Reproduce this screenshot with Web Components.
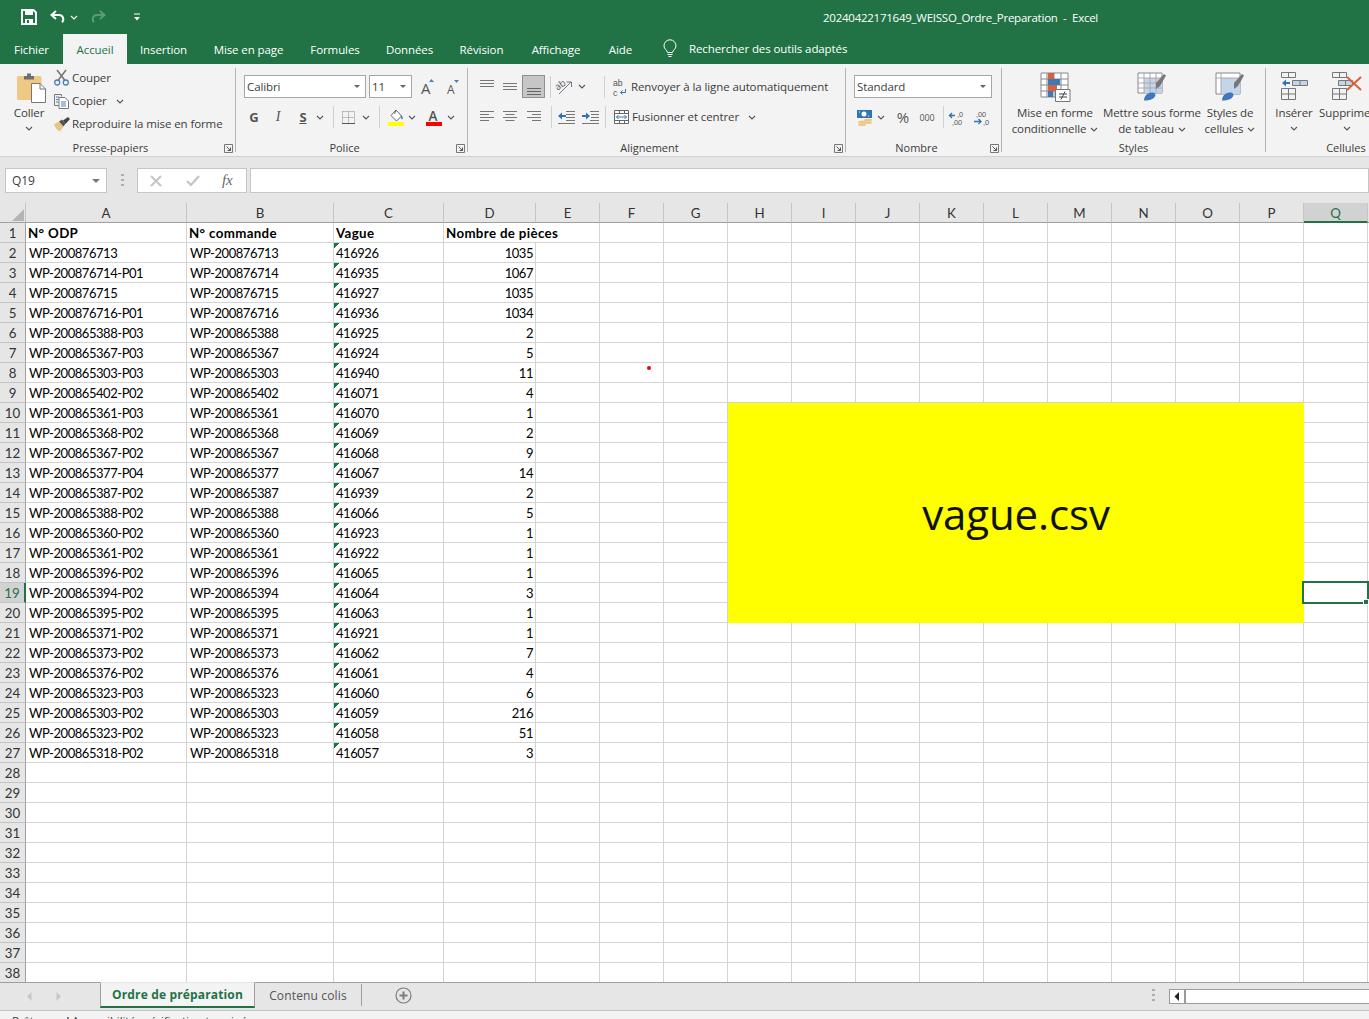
<!DOCTYPE html>
<html lang="fr">
<head>
<meta charset="utf-8">
<title>Excel</title>
<style>
  html, body { margin: 0; height: 1019px; overflow: hidden; background: #e6e6e6; }
  body { display: flex; flex-direction: column; font-family: "Open Sans", "Noto Sans", sans-serif; font-size: 11.5px; letter-spacing: -.1px; color: #3c3c3c; }
  x-row > span { margin-top: -1px; }
</style>
</head>
<body>
<x-titlebar title-text="20240422171649_WEISSO_Ordre_Preparation  -  Excel"></x-titlebar>
<x-tabstrip></x-tabstrip>
<x-ribbon>
  <x-rgroup label="Presse-papiers" width="236" launcher>
    <x-row>
      <x-big w="32" shift="4" style="margin-left:13px" icon="paste" lines="Coller" chev="below"></x-big>
      <x-col style="margin-left:9px">
        <x-row h="20"><x-icon name="cut"></x-icon><span style="margin-left:3px">Couper</span></x-row>
        <x-row h="20" style="margin-top:3px"><x-icon name="copy"></x-icon><span style="margin-left:3px">Copier</span><x-icon name="chev" style="margin-left:9px"></x-icon></x-row>
        <x-row h="20" style="margin-top:3px"><x-icon name="brush"></x-icon><span style="margin-left:2px">Reproduire la mise en forme</span></x-row>
      </x-col>
    </x-row>
  </x-rgroup>
  <x-rgroup label="Police" width="232" launcher>
    <x-col style="margin:7px 0 0 8px">
      <x-row h="23">
        <x-combo w="122" value="Calibri"></x-combo>
        <x-combo w="43" value="11" style="margin-left:3px"></x-combo>
        <x-tool w="20" style="margin-left:6px"><x-icon name="growa"></x-icon></x-tool>
        <x-tool w="20" style="margin-left:5px"><x-icon name="shrinka"></x-icon></x-tool>
      </x-row>
      <x-row h="20" style="margin-top:9px">
        <x-tool w="20"><b style="font:bold 13px 'Open Sans',sans-serif;color:#555">G</b></x-tool>
        <x-tool w="20" style="margin-left:4px"><i style="font:italic 14px 'Liberation Serif',serif;color:#555">I</i></x-tool>
        <x-tool w="20" style="margin-left:5px"><u style="font:bold 13px 'Open Sans',sans-serif;color:#555">S</u></x-tool>
        <x-tool w="14"><x-icon name="chev"></x-icon></x-tool>
        <x-vsep style="margin-left:6px"></x-vsep>
        <x-tool w="20" style="margin-left:4px"><x-icon name="borders"></x-icon></x-tool>
        <x-tool w="14" style="margin-left:1px"><x-icon name="chev"></x-icon></x-tool>
        <x-vsep style="margin-left:6px"></x-vsep>
        <x-tool w="20" style="margin-left:6px"><x-icon name="fill"></x-icon></x-tool>
        <x-tool w="14" style="margin-left:-1px"><x-icon name="chev"></x-icon></x-tool>
        <x-tool w="20" style="margin-left:5px"><x-icon name="fontcolor"></x-icon></x-tool>
        <x-tool w="14"><x-icon name="chev"></x-icon></x-tool>
      </x-row>
    </x-col>
  </x-rgroup>
  <x-rgroup label="Alignement" width="378" launcher>
    <x-col style="margin-top:7px">
      <x-row h="23">
        <x-tool w="20" style="margin-left:9px"><x-icon name="atop" style="margin-bottom:6px"></x-icon></x-tool>
        <x-tool w="20" style="margin-left:3px"><x-icon name="amid" style="margin-bottom:1px"></x-icon></x-tool>
        <x-tool w="23" selected style="margin-left:2px"><x-icon name="abot" style="margin-top:9px"></x-icon></x-tool>
        <x-vsep style="margin-left:5px"></x-vsep>
        <x-tool w="20" style="margin-left:4px"><x-icon name="orient"></x-icon></x-tool>
        <x-tool w="14"><x-icon name="chev"></x-icon></x-tool>
        <x-vsep style="margin-left:15px"></x-vsep>
        <x-tool w="18" style="margin-left:6px"><x-icon name="wrap"></x-icon></x-tool>
        <span style="margin-left:2px">Renvoyer à la ligne automatiquement</span>
      </x-row>
      <x-row h="20" style="margin-top:9px">
        <x-tool w="20" style="margin-left:9px"><x-icon name="aleft"></x-icon></x-tool>
        <x-tool w="20" style="margin-left:3px"><x-icon name="acenter"></x-icon></x-tool>
        <x-tool w="20" style="margin-left:4px"><x-icon name="aright"></x-icon></x-tool>
        <x-vsep style="margin-left:7px"></x-vsep>
        <x-tool w="20" style="margin-left:4px"><x-icon name="outdent"></x-icon></x-tool>
        <x-tool w="20" style="margin-left:4px"><x-icon name="indent"></x-icon></x-tool>
        <x-vsep style="margin-left:5px"></x-vsep>
        <x-tool w="18" style="margin-left:6px"><x-icon name="merge"></x-icon></x-tool>
        <span style="margin-left:2px">Fusionner et centrer</span>
        <x-icon name="chev" style="margin-left:9px"></x-icon>
      </x-row>
    </x-col>
  </x-rgroup>
  <x-rgroup label="Nombre" width="156" launcher>
    <x-col style="margin:7px 0 0 8px">
      <x-row h="23"><x-combo w="138" value="Standard"></x-combo></x-row>
      <x-row h="20" style="margin-top:9px">
        <x-tool w="20"><x-icon name="currency"></x-icon></x-tool>
        <x-tool w="14"><x-icon name="chev"></x-icon></x-tool>
        <x-tool w="20" style="margin-left:5px"><span style="font-size:15px;color:#555">%</span></x-tool>
        <x-tool w="20" style="margin-left:4px"><span style="font-size:9px;color:#555">000</span></x-tool>
        <x-vsep style="margin-left:6px"></x-vsep>
        <x-tool w="20" style="margin-left:3px"><x-icon name="decinc"></x-icon></x-tool>
        <x-tool w="20" style="margin-left:4px"><x-icon name="decdec"></x-icon></x-tool>
      </x-row>
    </x-col>
  </x-rgroup>
  <x-rgroup label="Styles" width="264">
    <x-row>
      <x-big w="94" style="margin-left:6px" icon="condfmt" lines="Mise en forme|conditionnelle" chev="inline"></x-big>
      <x-big w="100" icon="tablefmt" lines="Mettre sous forme|de tableau" chev="inline"></x-big>
      <x-big w="56" icon="cellstyle" lines="Styles de|cellules" chev="inline"></x-big>
    </x-row>
  </x-rgroup>
  <x-rgroup label="Cellules" width="160" last>
    <x-row>
      <x-big w="44" style="margin-left:6px" icon="insert" lines="Insérer" chev="below"></x-big>
      <x-big w="60" style="margin-left:1px" icon="delete" lines="Supprimer" chev="below"></x-big>
    </x-row>
  </x-rgroup>
</x-ribbon>
<x-formula cell="Q19"></x-formula>
<x-sheet></x-sheet>
<x-sheettabs></x-sheettabs>
<x-status></x-status>

<script>
const ICONS = {
  chev: [8, 5, '<path d="M1 1l3 3 3-3" fill="none" stroke="#555" stroke-width="1.1"/>'],
  launcher: [9, 9, '<path d="M.5 .5h8v8h-8z" fill="none" stroke="#777"/><path d="M2.500 2.500l4 4M3.500 6.500h3v-3" fill="none" stroke="#555"/>'],
  save: [16, 16, '<path d="M1 1h11.500L15 3.500V15H1z" fill="none" stroke="#fff" stroke-width="2"/><path d="M4 1h8v5H4zM4 10h8v5H4z" fill="#fff"/><path d="M6 11h2v3H6z" fill="#217346"/>'],
  undo: [16, 14, '<path d="M6 1L1.500 5 6 9" fill="none" stroke="#fff" stroke-width="2"/><path d="M2 5h7a4.200 4.200 0 0 1 3 7.200" fill="none" stroke="#fff" stroke-width="2"/>'],
  redo: [16, 14, '<path d="M10 1l4.500 4L10 9" fill="none" stroke="#5b9a78" stroke-width="2"/><path d="M14 5H7a4.200 4.200 0 0 0-3 7.200" fill="none" stroke="#5b9a78" stroke-width="2"/>'],
  qatmore: [8, 8, '<path d="M1 1h6" stroke="#fff"/><path d="M1 4h6L4 7.500z" fill="#fff"/>'],
  bulb: [14, 19, '<path d="M4.500 12.500C4 10 1 9 1 5.800a6 6 0 0 1 12 0C13 9 10 10 9.500 12.500z" fill="none" stroke="#fff"/><path d="M4.500 14.500h5M5.500 16.500h3" stroke="#fff"/>'],
  paste: [29, 31, '<path d="M0 5.500a1.500 1.500 0 0 1 1.500-1.500H23a1.500 1.500 0 0 1 1.500 1.500V28H1.500A1.500 1.500 0 0 1 0 26.500z" fill="#efc883"/><path d="M7 4h3V1.500h4V4h3v3.500H7z" fill="#6f6f6f"/><path d="M14.500 11.500h8.500l5.500 5.500v13.500h-14z" fill="#fff" stroke="#777"/><path d="M23 11.500V17h5.500" fill="none" stroke="#777"/>'],
  cut: [15, 16, '<path d="M3 0l8 10.500M12 0L4 10.500" stroke="#777" stroke-width="1.600" fill="none"/><circle cx="3.200" cy="12.500" r="2.500" fill="none" stroke="#4a7ebb" stroke-width="1.300"/><circle cx="11.800" cy="12.500" r="2.500" fill="none" stroke="#4a7ebb" stroke-width="1.300"/>'],
  copy: [15, 15, '<path d="M.5 .5h7v2M.5 .5v11h4" fill="none" stroke="#777"/><path d="M5 3.500h6l3.500 3.500v7.500H5z" fill="#fff" stroke="#777"/><path d="M2 3h3M2 5.500h2.500M2 8h2.500M7 8h5M7 10h5M7 12h5" stroke="#4a7ebb"/>'],
  brush: [16, 15, '<path d="M0 7.500l5-3 4.500 5-3.500 5C3.500 13.500 1 10.500 0 7.500z" fill="#e8c485"/><path d="M5 4.500l3-2 3.500 4-2 3z" fill="#555"/><path d="M9 3.500L14 0l2 2-4.500 5z" fill="#444"/>'],
  growa: [14, 17, '<text x="0" y="16" font-family="Open Sans" font-size="15" fill="#555">A</text><path d="M8 4l2.500-3L13 4z" fill="#4a7ebb"/>'],
  shrinka: [13, 15, '<text x="0" y="14.500" font-family="Open Sans" font-size="12" fill="#555">A</text><path d="M7 1h5L9.500 4z" fill="#4a7ebb"/>'],
  borders: [13, 13, '<path d="M.5 .5h12v12M.5 .5v12M6.500 .5v12M.5 6.500h12" fill="none" stroke="#8a8a8a" stroke-dasharray="1 1"/><path d="M0 12.500h13" stroke="#555"/>'],
  fill: [16, 17, '<path d="M8 1l5.500 6-5 5L3 6.500z" fill="#fff" stroke="#666"/><path d="M8 1L6.500 5" stroke="#666"/><path d="M13 6c1.500 1.500 2.500 3 1.500 4s-2-1-1.500-4z" fill="#4a7ebb"/><path d="M0 13h16v4H0z" fill="#ff0"/>'],
  fontcolor: [16, 17, '<text x="2.500" y="12" font-family="Open Sans" font-size="13.500" font-weight="600" fill="#555">A</text><path d="M0 13h16v4H0z" fill="#f00"/>'],
  atop: [14, 7, '<path d="M0 .5h14M0 3.500h14M0 6.500h14" stroke="#777"/>'],
  amid: [14, 7, '<path d="M0 .5h14M0 3.500h14M0 6.500h14" stroke="#777"/>'],
  abot: [14, 7, '<path d="M0 .5h14M0 3.500h14M0 6.500h14" stroke="#666"/>'],
  aleft: [14, 12, '<path d="M0 .5h14M0 3.500h9M0 6.500h14M0 9.500h9" stroke="#777"/>'],
  acenter: [14, 12, '<path d="M0 .5h14M2.500 3.500h9M0 6.500h14M2.500 9.500h9" stroke="#777"/>'],
  aright: [14, 12, '<path d="M0 .5h14M5 3.500h9M0 6.500h14M5 9.500h9" stroke="#777"/>'],
  orient: [18, 16, '<text x="0" y="9" font-family="Open Sans" font-size="9.500" fill="#555" transform="rotate(-35 5 8)">ab</text><path d="M3 15L15 3M10.500 3H15.500V8" fill="none" stroke="#777"/>'],
  outdent: [17, 13, '<path d="M8 .5h9M8 3.500h9M8 6.500h9M8 9.500h9M0 12.500h17" stroke="#777"/><path d="M0 5l4-3.500V4h4v2H4v2.500z" fill="#2f75b5"/>'],
  indent: [17, 13, '<path d="M8 .5h9M9 3.500h8M9 6.500h8M8 9.500h9M0 12.500h17" stroke="#777"/><path d="M8 5L4 1.500V4H0v2h4v2.500z" fill="#2f75b5"/>'],
  wrap: [14, 18, '<text x="0" y="7.500" font-family="Liberation Sans" font-size="8.700" fill="#555">ab</text><text x="0" y="17.500" font-family="Liberation Sans" font-size="8.700" fill="#555">c</text><path d="M12.500 11v3.500H8M9.500 12.500l-2 2 2 2" fill="none" stroke="#2f75b5"/>'],
  merge: [15, 14, '<path d="M.5 .5h14v13H.5zM.5 3.500h14M.5 10.500h14M5.500 .5v3M10.500 .5v3M5.500 10.500v3M10.500 10.500v3" fill="#fff" stroke="#666"/><path d="M2.500 7h10M4.500 5l-2 2 2 2M10.500 5l2 2-2 2" fill="none" stroke="#2f75b5"/>'],
  currency: [17, 17, '<path d="M1 1h15v8H1z" fill="#2f75b5"/><circle cx="8" cy="5" r="2.500" fill="#fff"/><path d="M3 2.500h1v1H3zM12 6.500h1v1h-1z" fill="#fff"/><ellipse cx="12" cy="11" rx="4" ry="1.500" fill="#f0c987"/><ellipse cx="6" cy="13" rx="4" ry="1.500" fill="#f0c987"/><ellipse cx="6" cy="15.500" rx="4" ry="1.500" fill="#f0c987"/><ellipse cx="12" cy="13.500" rx="4" ry="1.500" fill="#f0c987"/>'],
  decinc: [16, 15, '<text x="8" y="6.500" font-family="Liberation Sans" font-size="7.300" fill="#555">,0</text><text x="3" y="15" font-family="Liberation Sans" font-size="7.300" fill="#555">,00</text><path d="M0 5.500h6M3 3L.5 5.500 3 8" fill="none" stroke="#2f75b5" stroke-width="1.300"/>'],
  decdec: [16, 15, '<text x="3" y="6.500" font-family="Liberation Sans" font-size="7.300" fill="#555">,00</text><text x="10" y="15" font-family="Liberation Sans" font-size="7.300" fill="#555">,0</text><path d="M1 11.500h7M5.500 9L8 11.500 5.500 14" fill="none" stroke="#2f75b5" stroke-width="1.300"/>'],
  condfmt: [31, 30, '<path d="M1 1h27v24H1zM1 7h27M1 13h27M1 19h27M7 1v24M14 1v24M21 1v24" fill="#fff" stroke="#888"/><path d="M8 1h6v6H8zM8 13h9v6H8z" fill="#d9603b"/><path d="M8 7h12v6H8zM8 19h5v6H8z" fill="#3d78b8"/><path d="M15.500 17.500h14.500v12H15.500z" fill="#fff" stroke="#777"/><path d="M19 22h8M19 25h8M25 19.500l-4 8" stroke="#444" fill="none"/>'],
  tablefmt: [30, 29, '<path d="M1 1h24v20H1z" fill="#fff" stroke="#888"/><path d="M7 6h18v15H7z" fill="#c3d5ea"/><path d="M1 6h24M1 11h24M1 16h24M7 1v20M13 1v20M19 1v20" fill="none" stroke="#aaa"/><path d="M19 11l8-9 2 1.500L23 14 19 17z" fill="#777"/><path d="M7 28.500c0-4 3-8 8-8 2 0 3 .5 3.500 2.500-1 4-5 5.500-11.500 5.500z" fill="#3d78b8"/>'],
  cellstyle: [30, 29, '<path d="M1 1h24v21H1z" fill="#fff" stroke="#888"/><path d="M6 6h19v16H6z" fill="#c3d5ea"/><path d="M6 1v21M1 6h24" stroke="#aaa" fill="none"/><path d="M19 11l8-9 2 1.500L23 14 19 17z" fill="#777"/><path d="M7 28.500c0-4 3-8 8-8 2 0 3 .5 3.500 2.500-1 4-5 5.500-11.500 5.500z" fill="#3d78b8"/>'],
  insert: [27, 29, '<path d="M.5 .5h14v5H.5zM7.500 .5v5M.5 16.500h14v11H.5zM7.500 16.500v11M.5 22h14" fill="none" stroke="#777"/><path d="M11.500 8.500h15v5H11.500zM19 8.500v5" fill="#c3d5ea" stroke="#777"/><path d="M1 11l4-3.500V10h4v2H5v2.500z" fill="#2f75b5"/>'],
  delete: [31, 29, '<path d="M.5 .5h14v5H.5zM7.500 .5v5M.5 16.500h14v11H.5zM7.500 16.500v11M.5 22h14" fill="none" stroke="#777"/><path d="M6.500 8.500h14v5H6.500zM13.500 8.500v5" fill="#c3d5ea" stroke="#777"/><path d="M15 5l14 13M29 5L15 18" stroke="#d9603b" stroke-width="2"/>'],
  cancel: [12, 12, '<path d="M1 1l10 10M11 1L1 11" stroke="#c4c4c4" stroke-width="2"/>'],
  enter: [14, 12, '<path d="M1 6l4 4 8-9" fill="none" stroke="#c4c4c4" stroke-width="2.200"/>'],
  plus: [17, 17, '<circle cx="8.500" cy="8.500" r="7.500" fill="none" stroke="#7d7d7d" stroke-width="1.200"/><path d="M8.500 4.500v8M4.500 8.500h8" stroke="#7d7d7d" stroke-width="2"/>'],
  navl: [5, 9, '<path d="M4.500 0v9L0 4.500z" fill="#c8c8c8"/>'],
  navr: [5, 9, '<path d="M.5 0v9L5 4.500z" fill="#c8c8c8"/>'],
  sbl: [6, 9, '<path d="M5 0v9L.5 4.500z" fill="#222"/>'],
  acc: [10, 14, '<path d="M1 13V6l4 3 1-8v12" fill="none" stroke="#555"/>'],
  grip: [3, 12, '<path d="M0 0h3v2H0zM0 5h3v2H0zM0 10h3v2H0z" fill="#adadad"/>']
};

class XIcon extends HTMLElement {
  connectedCallback() {
    const [w, h, body] = ICONS[this.getAttribute('name')];
    this.attachShadow({ mode: 'open' }).innerHTML = `
      <style>:host { display: inline-flex; flex: none; } svg { display: block; overflow: visible; }</style>
      <svg xmlns="http://www.w3.org/2000/svg" width="${w}" height="${h}" viewBox="0 0 ${w} ${h}">${body}</svg>`;
  }
}

class XRow extends HTMLElement {
  connectedCallback() {
    const h = this.getAttribute('h');
    this.attachShadow({ mode: 'open' }).innerHTML = `
      <style>:host { display: flex; align-items: center; flex: none; white-space: nowrap; ${h ? `height:${h}px;` : 'align-items:flex-start;'} }</style>
      <slot></slot>`;
  }
}

class XCol extends HTMLElement {
  connectedCallback() {
    this.attachShadow({ mode: 'open' }).innerHTML = `
      <style>:host { display: flex; flex-direction: column; flex: none; }</style><slot></slot>`;
  }
}

class XVsep extends HTMLElement {
  connectedCallback() {
    this.attachShadow({ mode: 'open' }).innerHTML = `
      <style>:host { display: block; width: 1px; height: 22px; background: #d0d0d0; flex: none; }</style>`;
  }
}

class XTool extends HTMLElement {
  connectedCallback() {
    const sel = this.hasAttribute('selected');
    this.attachShadow({ mode: 'open' }).innerHTML = `
      <style>:host { display: flex; align-items: center; justify-content: center; flex: none; box-sizing: border-box;
        width: ${this.getAttribute('w')}px; height: ${sel ? 23 : 20}px;
        ${sel ? 'background:#c6c6c6;border:1px solid #8f8f8f;' : ''} }</style>
      <slot></slot>`;
  }
}

class XCombo extends HTMLElement {
  connectedCallback() {
    this.attachShadow({ mode: 'open' }).innerHTML = `
      <style>
        :host { display: flex; align-items: center; box-sizing: border-box; flex: none; width: ${this.getAttribute('w')}px; height: 23px;
          background: #fff; border: 1px solid #a6a6a6; padding: 0 4px 0 2px; color: #3c3c3c; }
        span { flex: 1; }
        i { width: 0; height: 0; border: 3px solid transparent; border-top: 3px solid #666; border-bottom: 0; margin-right: 1px; }
      </style>
      <span>${this.getAttribute('value')}</span><i></i>`;
  }
}

class XBig extends HTMLElement {
  connectedCallback() {
    const lines = this.getAttribute('lines').split('|');
    const chev = this.getAttribute('chev');
    const chevSvg = '<x-icon name="chev"></x-icon>';
    const shift = this.getAttribute('shift') || 0;
    const text = lines.map((l, i) => `<div class="l">${l}${chev === 'inline' && i === lines.length - 1 ? ' ' + chevSvg : ''}</div>`).join('');
    this.attachShadow({ mode: 'open' }).innerHTML = `
      <style>
        :host { display: flex; flex-direction: column; align-items: center; flex: none; width: ${this.getAttribute('w')}px; padding-top: 4px; white-space: nowrap; }
        .i { height: 33px; padding-left: ${shift}px; display: flex; align-items: flex-start; justify-content: center; }
        .l { height: 16px; line-height: 16px; text-align: center; }
        .l x-icon { vertical-align: middle; margin-left: 1px; }
        .b { height: 14px; display: flex; align-items: center; }
      </style>
      <div class="i"><x-icon name="${this.getAttribute('icon')}"></x-icon></div>
      ${text}
      ${chev === 'below' ? `<div class="b">${chevSvg}</div>` : ''}`;
  }
}

class XRgroup extends HTMLElement {
  connectedCallback() {
    const launcher = this.hasAttribute('launcher');
    const last = this.hasAttribute('last');
    this.attachShadow({ mode: 'open' }).innerHTML = `
      <style>
        :host { display: flex; flex-direction: column; flex: none; box-sizing: border-box; height: 84px;
          width: ${this.getAttribute('width')}px; ${last ? '' : 'border-right: 1px solid #b4b4b4;'} }
        .c { height: 73px; display: flex; flex-direction: column; align-items: flex-start; }
        .f { height: 14px; margin-bottom: -3px; display: grid; grid-template-columns: 1fr ${launcher ? '14px' : ''}; align-items: center; }
        .t { text-align: center; line-height: 14px; font-size: 11px; letter-spacing: 0; }
        x-icon { margin-left: 3px; }
      </style>
      <div class="c"><slot></slot></div>
      <div class="f"><div class="t">${this.getAttribute('label')}</div>${launcher ? '<x-icon name="launcher"></x-icon>' : ''}</div>`;
  }
}

class XRibbon extends HTMLElement {
  connectedCallback() {
    this.attachShadow({ mode: 'open' }).innerHTML = `
      <style>
        :host { display: flex; box-sizing: border-box; height: 93px; padding-top: 4px; background: #f3f3f3; border-bottom: 1px solid #d0d0d0; overflow: hidden; flex: none; color: #3c3c3c; }
      </style>
      <slot></slot>`;
  }
}

class XTitlebar extends HTMLElement {
  connectedCallback() {
    this.attachShadow({ mode: 'open' }).innerHTML = `
      <style>
        :host { display: flex; align-items: center; height: 34px; background: #217346; color: #fff; flex: none; box-sizing: border-box; padding-left: 21px; white-space: pre; }
        x-icon { flex: none; }
        .t { margin-left: 682px; letter-spacing: -.25px; }
      </style>
      <x-icon name="save"></x-icon>
      <x-icon name="undo" style="margin-left:13px"></x-icon>
      <x-icon name="chev" style="margin-left:4px;filter:brightness(3)"></x-icon>
      <x-icon name="redo" style="margin-left:12px"></x-icon>
      <x-icon name="chev" style="margin-left:4px;opacity:.3"></x-icon>
      <x-icon name="qatmore" style="margin-left:15px"></x-icon>
      <div class="t">${this.getAttribute('title-text')}</div>`;
  }
}

class XTabstrip extends HTMLElement {
  connectedCallback() {
    const tabs = [['Fichier', 63], ['Accueil', 64, 1], ['Insertion', 73], ['Mise en page', 97], ['Formules', 76], ['Données', 73], ['Révision', 71], ['Affichage', 78], ['Aide', 51]];
    this.attachShadow({ mode: 'open' }).innerHTML = `
      <style>
        :host { display: flex; height: 30px; background: #217346; color: #fff; flex: none; white-space: nowrap; }
        .tab { display: flex; align-items: center; justify-content: center; box-sizing: border-box; padding-top: 1px; }
        .tab:first-child { padding: 0 3px 0 0; }
        .on { background: #f3f3f3; color: #217346; }
        .s { display: flex; align-items: center; margin-left: 17px; }
        .s span { margin-left: 12px; margin-top: -1px; }
      </style>
      ${tabs.map(([t, w, on]) => `<div class="tab ${on ? 'on' : ''}" style="width:${w}px">${t}</div>`).join('')}
      <div class="s"><x-icon name="bulb"></x-icon><span>Rechercher des outils adaptés</span></div>`;
  }
}

class XFormula extends HTMLElement {
  connectedCallback() {
    this.attachShadow({ mode: 'open' }).innerHTML = `
      <style>
        :host { display: flex; height: 46px; box-sizing: border-box; padding: 11px 0 11px 5px; background: #e6e6e6; flex: none; color: #3c3c3c; }
        .box { box-sizing: border-box; height: 25px; background: #fff; border: 1px solid #c6c6c6; display: flex; align-items: center; }
        .name { width: 102px; padding: 0 6px 0 6px; justify-content: space-between; font-size: 12px; }
        .name i { width: 0; height: 0; border: 4px solid transparent; border-top: 4px solid #777; border-bottom: 0; }
        .grip { width: 30px; display: flex; align-items: center; justify-content: center; }
        .btn { width: 110px; padding-left: 12px; }
        .btn x-icon:nth-child(2) { margin-left: 24px; }
        .fx { font: italic 15px "Liberation Serif", serif; color: #666; margin-left: 22px; }
        .input { flex: 1; margin-left: 3px; }
      </style>
      <div class="box name">${this.getAttribute('cell')}<i></i></div>
      <div class="grip"><x-icon name="grip"></x-icon></div>
      <div class="box btn"><x-icon name="cancel"></x-icon><x-icon name="enter"></x-icon><span class="fx">fx</span></div>
      <div class="box input"></div>`;
  }
}

const ROWS = [
  ['WP-200876713','WP-200876713','416926',1035],['WP-200876714-P01','WP-200876714','416935',1067],
  ['WP-200876715','WP-200876715','416927',1035],['WP-200876716-P01','WP-200876716','416936',1034],
  ['WP-200865388-P03','WP-200865388','416925',2],['WP-200865367-P03','WP-200865367','416924',5],
  ['WP-200865303-P03','WP-200865303','416940',11],['WP-200865402-P02','WP-200865402','416071',4],
  ['WP-200865361-P03','WP-200865361','416070',1],['WP-200865368-P02','WP-200865368','416069',2],
  ['WP-200865367-P02','WP-200865367','416068',9],['WP-200865377-P04','WP-200865377','416067',14],
  ['WP-200865387-P02','WP-200865387','416939',2],['WP-200865388-P02','WP-200865388','416066',5],
  ['WP-200865360-P02','WP-200865360','416923',1],['WP-200865361-P02','WP-200865361','416922',1],
  ['WP-200865396-P02','WP-200865396','416065',1],['WP-200865394-P02','WP-200865394','416064',3],
  ['WP-200865395-P02','WP-200865395','416063',1],['WP-200865371-P02','WP-200865371','416921',1],
  ['WP-200865373-P02','WP-200865373','416062',7],['WP-200865376-P02','WP-200865376','416061',4],
  ['WP-200865323-P03','WP-200865323','416060',6],['WP-200865303-P02','WP-200865303','416059',216],
  ['WP-200865323-P02','WP-200865323','416058',51],['WP-200865318-P02','WP-200865318','416057',3]
];

class XSheet extends HTMLElement {
  connectedCallback() {
    const cols = 'ABCDEFGHIJKLMNOPQR'.split('');
    const widths = [161, 147, 110, 92].concat(Array(14).fill(64));
    let html = '<div class="ch corner"><svg width="14" height="14"><path d="M13 1v12H1z" fill="#b4b4b4"/></svg></div>';
    cols.forEach(c => { html += `<div class="ch ${c === 'Q' ? 'sel' : ''}">${c === 'R' ? '' : c}</div>`; });
    for (let r = 1; r <= 38; r++) {
      html += `<div class="rh ${r === 19 ? 'sel' : ''}">${r}</div>`;
      const d = r === 1 ? ['N° ODP', 'N° commande', 'Vague', 'Nombre de pièces'] : (ROWS[r - 2] || []);
      cols.forEach((c, i) => {
        let cls = 'c';
        if (r === 1 && i < 4) cls += ' b';
        if (r === 1 && i === 3) cls += ' over';
        if (r > 1 && i === 3) cls += ' num';
        if (r > 1 && i === 2 && d[2]) cls += ' tri';
        html += `<div class="${cls}">${i < 4 && d[i] !== undefined ? d[i] : ''}</div>`;
      });
    }
    this.attachShadow({ mode: 'open' }).innerHTML = `
      <style>
        :host { display: block; position: relative; height: 779px; overflow: hidden; background: #fff; flex: none; font-family: Lato, "Liberation Sans", sans-serif; font-size: 13px; letter-spacing: 0; color: #000; }
        .g { display: grid; grid-template-columns: 26px ${widths.map(w => w + 'px').join(' ')}; grid-auto-rows: 20px; }
        .g > div { box-sizing: border-box; white-space: nowrap; }
        .ch, .rh { background: #e6e6e6; color: #333; display: flex; align-items: center; justify-content: center; padding-top: 1px; font-size: 13.3px; }
        .ch { border-right: 1px solid #c4c4c4; border-bottom: 1px solid #9f9f9f; }
        .rh { border-right: 1px solid #9f9f9f; border-bottom: 1px solid #c4c4c4; }
        .corner { padding: 0; justify-content: flex-end; align-items: flex-end; }
        .sel { background: #d2d2d2; color: #217346; }
        .ch.sel { border-bottom: 2px solid #217346; }
        .rh.sel { border-right: 2px solid #217346; }
        .c { border-right: 1px solid #d4d4d4; border-bottom: 1px solid #d4d4d4; padding: 1px 2px 0 3px; line-height: 18px; letter-spacing: -.45px; }
        .b { font-weight: 700; font-size: 13.3px; letter-spacing: .35px; padding-left: 2px; }
        .over { border-right: 0; overflow: visible; position: relative; z-index: 1; }
        .num { text-align: right; }
        .tri { background: linear-gradient(135deg, #107c41 0 4px, transparent 4px); padding-left: 2px; }
        .pic { position: absolute; left: 728px; top: 200px; width: 576px; height: 220px; background: #ff0; display: flex; align-items: center; justify-content: center; font-size: 42px; letter-spacing: -.1px; font-family: "Open Sans", sans-serif; color: #111; }
        .dot { position: absolute; left: 647px; top: 163px; width: 4px; height: 4px; border-radius: 50%; background: #f00020; }
        .cur { position: absolute; left: 1302px; top: 378px; width: 67px; height: 23px; box-sizing: border-box; border: 2px solid #217346; }
        .cur i { position: absolute; right: -2px; bottom: -3px; width: 4px; height: 4px; background: #217346; border: 1px solid #fff; box-sizing: content-box; }
      </style>
      <div class="g">${html}</div>
      <div class="pic">vague.csv</div>
      <div class="dot"></div>
      <div class="cur"><i></i></div>`;
  }
}

class XSheettabs extends HTMLElement {
  connectedCallback() {
    this.attachShadow({ mode: 'open' }).innerHTML = `
      <style>
        :host { display: flex; box-sizing: border-box; height: 28px; background: #e6e6e6; border-top: 1px solid #9f9f9f; flex: none; white-space: nowrap; color: #555; font-size: 12px; letter-spacing: .15px; }
        .nav { width: 100px; display: flex; align-items: center; padding-left: 27px; box-sizing: border-box; gap: 24px; }
        .on { width: 155px; box-sizing: border-box; margin-top: -1px; height: 26px; background: #f3f3f3; border: 1px solid #9f9f9f; border-top: 1px solid #e6e6e6; border-bottom: 2px solid #217346; color: #217346; font-weight: 700; display: flex; align-items: center; justify-content: center; }
        .off { width: 107px; box-sizing: border-box; height: 22px; margin-top: 1px; border-right: 1px solid #9f9f9f; display: flex; align-items: center; justify-content: center; }
        .plus { margin: 4px 0 0 33px; }
        .sp { flex: 1; }
        .grip { margin: 6px 14px 0 0; }
        .sb { width: 201px; height: 15px; margin-top: 6px; background: #fff; border: 1px solid #9a9a9a; border-right: 0; display: flex; flex: none; box-sizing: border-box; }
        .sb b { width: 14px; height: 13px; display: flex; align-items: center; justify-content: center; border-right: 2px solid #9a9a9a; }
        .wrap { width: 200px; overflow: hidden; display: flex; flex: none; }
      </style>
      <div class="nav"><x-icon name="navl"></x-icon><x-icon name="navr"></x-icon></div>
      <div class="on">Ordre de préparation</div>
      <div class="off">Contenu colis</div>
      <x-icon class="plus" name="plus"></x-icon>
      <div class="sp"></div>
      <x-icon class="grip" name="grip"></x-icon>
      <div class="wrap"><div class="sb"><b><x-icon name="sbl"></x-icon></b></div></div>`;
  }
}

class XStatus extends HTMLElement {
  connectedCallback() {
    this.attachShadow({ mode: 'open' }).innerHTML = `
      <style>
        :host { display: flex; align-items: flex-start; height: 40px; background: #f3f3f3; border-top: 1px solid #c4c4c4; box-sizing: border-box; padding: 2px 0 0 12px; flex: none; color: #3c3c3c; white-space: nowrap; }
        span { line-height: 16px; }
        .p { width: 50px; }
      </style>
      <span class="p">Prêt</span>
      <x-icon name="acc" style="margin-top:3px"></x-icon>
      <span>Accessibilité : vérification terminée</span>`;
  }
}

customElements.define('x-icon', XIcon);
customElements.define('x-row', XRow);
customElements.define('x-col', XCol);
customElements.define('x-vsep', XVsep);
customElements.define('x-tool', XTool);
customElements.define('x-combo', XCombo);
customElements.define('x-big', XBig);
customElements.define('x-rgroup', XRgroup);
customElements.define('x-ribbon', XRibbon);
customElements.define('x-titlebar', XTitlebar);
customElements.define('x-tabstrip', XTabstrip);
customElements.define('x-formula', XFormula);
customElements.define('x-sheet', XSheet);
customElements.define('x-sheettabs', XSheettabs);
customElements.define('x-status', XStatus);
</script>
</body>
</html>
